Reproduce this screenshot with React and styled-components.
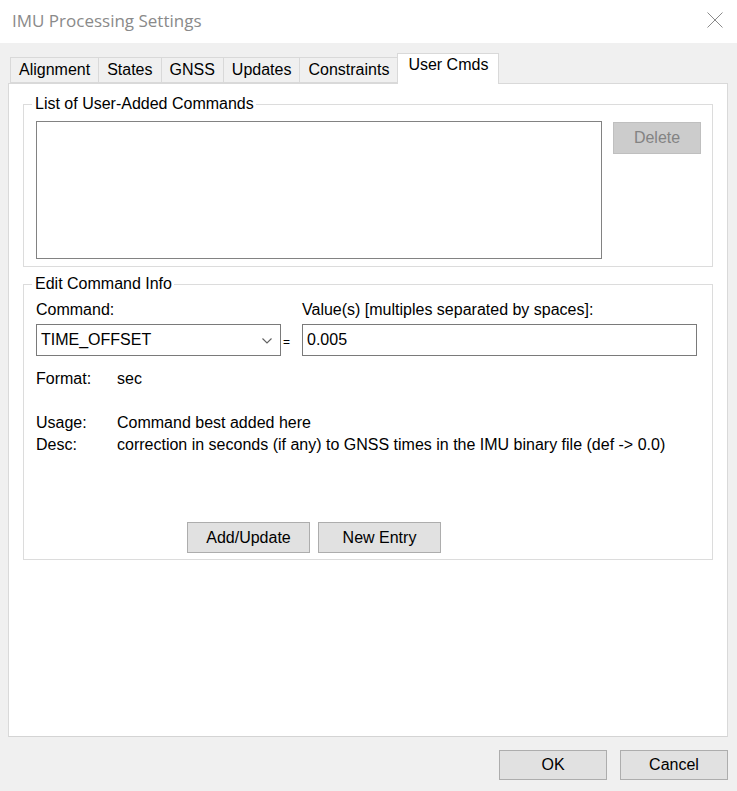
import React from 'react'
import styled, { createGlobalStyle } from 'styled-components'

const GlobalStyle = createGlobalStyle`
  html, body {
    margin: 0;
    padding: 0;
  }
  body {
    font-family: "Liberation Sans", Arial, sans-serif;
    font-size: 16px;
    color: #000;
    background: #f0f0f0;
  }
`

const tabs = ['Alignment', 'States', 'GNSS', 'Updates', 'Constraints', 'User Cmds']

const App = () => {
  return (
    <Window>
      <GlobalStyle />
      <TitleBar>
        <Title>IMU Processing Settings</Title>
        <CloseIcon viewBox='0 0 16 16'>
          <path d='M0.5 0.5 L15.5 15.5 M15.5 0.5 L0.5 15.5' />
        </CloseIcon>
      </TitleBar>

      <Body>
        <TabRow>
          {tabs.map((name) => (
            <Tab key={name} $active={name === 'User Cmds'}>{name}</Tab>
          ))}
        </TabRow>

        <Panel>
          <Group $padRight={11}>
            <Legend>List of User-Added Commands</Legend>
            <ListRow>
              <ListBox />
              <Button $disabled $width={88} $height={32}>Delete</Button>
            </ListRow>
          </Group>

          <Group $gap $padRight={15}>
            <Legend>Edit Command Info</Legend>
            <CommandGrid>
              <FieldLabel>Command:</FieldLabel>
              <span />
              <FieldLabel>Value(s) [multiples separated by spaces]:</FieldLabel>
              <Combo>
                <span>TIME_OFFSET</span>
                <ChevronIcon viewBox='0 0 10 6'>
                  <path d='M0.5 0.5 L5 5 L9.5 0.5' />
                </ChevronIcon>
              </Combo>
              <Equals>=</Equals>
              <TextInput>0.005</TextInput>
            </CommandGrid>

            <InfoGrid>
              <span>Format:</span>
              <span>sec</span>
              <Blank />
              <span>Usage:</span>
              <span>Command best added here</span>
              <span>Desc:</span>
              <span>correction in seconds (if any) to GNSS times in the IMU binary file (def -&gt; 0.0)</span>
            </InfoGrid>

            <ActionRow>
              <Button $width={123} $height={31}>Add/Update</Button>
              <Button $width={123} $height={31}>New Entry</Button>
            </ActionRow>
          </Group>
        </Panel>

        <Footer>
          <Button $width={108} $height={30}>OK</Button>
          <Button $width={108} $height={30}>Cancel</Button>
        </Footer>
      </Body>
    </Window>
  )
}

const Window = styled.div`
  display: flex;
  flex-direction: column;
  height: 100vh;
  width: 100%;
  overflow: hidden;
`

const TitleBar = styled.div`
  height: 43px;
  flex-shrink: 0;
  background: #fff;
  display: flex;
  align-items: center;
  justify-content: space-between;
  padding: 0 14px 0 12px;
  box-sizing: border-box;
`

const Title = styled.div`
  font-family: "Open Sans", "Noto Sans", sans-serif;
  font-size: 17px;
  color: #8a8a8a;
  margin-top: -2px;
`

const CloseIcon = styled.svg`
  width: 16px;
  height: 16px;
  margin-top: -4px;
  fill: none;
  stroke: #8a8a8a;
  stroke-width: 1;
`

const Body = styled.div`
  flex: 1;
  display: flex;
  flex-direction: column;
  padding: 0 9px 0 8px;
  min-height: 0;
`

const TabRow = styled.div`
  height: 40px;
  display: flex;
  align-items: flex-end;
  padding-left: 2px;
  position: relative;
  z-index: 1;
`

const Tab = styled.div`
  box-sizing: border-box;
  height: ${(p) => (p.$active ? '31px' : '26px')};
  margin: ${(p) => (p.$active ? '0 -1px -1px -1px' : '0')};
  padding: ${(p) => (p.$active ? '3px 10px 0' : '4px 8px 0')};
  background: ${(p) => (p.$active ? '#fff' : '#f0f0f0')};
  border: 1px solid #d9d9d9;
  border-bottom: ${(p) => (p.$active ? 'none' : '1px solid #d9d9d9')};
  border-left: ${(p) => (p.$active ? '1px solid #d9d9d9' : 'none')};
  line-height: 16px;
  white-space: nowrap;

  &:first-child {
    border-left: 1px solid #d9d9d9;
  }
`

const Panel = styled.div`
  flex: 1;
  background: #fff;
  border: 1px solid #d9d9d9;
  border-bottom-color: #d4d4d4;
  padding: 12px 14px 0;
  display: flex;
  flex-direction: column;
  min-height: 0;
`

const Group = styled.fieldset`
  margin: ${(p) => (p.$gap ? '9px 0 0' : '0')};
  border: 1px solid #dcdcdc;
  padding: ${(p) => (p.$gap ? '10px' : '9px')} ${(p) => p.$padRight}px ${(p) => (p.$gap ? '6px' : '7px')} 12px;
  min-width: 0;
`

const Legend = styled.legend`
  line-height: 16px;
  padding: 0 2px 0 3px;
  margin-left: -4px;
`

const ListRow = styled.div`
  display: flex;
  align-items: flex-start;
  gap: 11px;
`

const ListBox = styled.div`
  flex: 1;
  height: 138px;
  box-sizing: border-box;
  border: 1px solid #828282;
  background: #fff;
`

const Button = styled.div`
  box-sizing: border-box;
  width: ${(p) => p.$width}px;
  height: ${(p) => p.$height}px;
  margin-top: ${(p) => (p.$disabled ? '1px' : '0')};
  display: flex;
  align-items: center;
  justify-content: center;
  background: ${(p) => (p.$disabled ? '#cccccc' : '#e1e1e1')};
  border: 1px solid ${(p) => (p.$disabled ? '#bfbfbf' : '#adadad')};
  color: ${(p) => (p.$disabled ? '#838383' : '#000')};
  flex-shrink: 0;
`

const CommandGrid = styled.div`
  display: grid;
  grid-template-columns: 245px 21px 1fr;
  row-gap: 6px;
  align-items: end;
`

const FieldLabel = styled.span`
  line-height: 16px;
`

const Combo = styled.div`
  box-sizing: border-box;
  height: 32px;
  border: 1px solid #7a7a7a;
  background: #fff;
  display: flex;
  align-items: center;
  justify-content: space-between;
  padding: 0 8px 0 4px;
`

const ChevronIcon = styled.svg`
  width: 10px;
  height: 6px;
  margin-top: 2px;
  fill: none;
  stroke: #606060;
  stroke-width: 1.1;
`

const Equals = styled.span`
  align-self: center;
  padding: 4px 0 0 2px;
  font-size: 12px;
`

const TextInput = styled.div`
  box-sizing: border-box;
  height: 32px;
  border: 1px solid #7a7a7a;
  background: #fff;
  display: flex;
  align-items: center;
  padding: 0 4px;
`

const InfoGrid = styled.div`
  display: grid;
  grid-template-columns: 81px 1fr;
  line-height: 22px;
  margin-top: 12px;
  white-space: nowrap;
`

const Blank = styled.div`
  grid-column: 1 / -1;
  height: 22px;
`

const ActionRow = styled.div`
  display: flex;
  gap: 8px;
  margin: 66px 0 0 151px;
`

const Footer = styled.div`
  display: flex;
  justify-content: flex-end;
  gap: 13px;
  padding: 13px 0 11px;
`

export default App
